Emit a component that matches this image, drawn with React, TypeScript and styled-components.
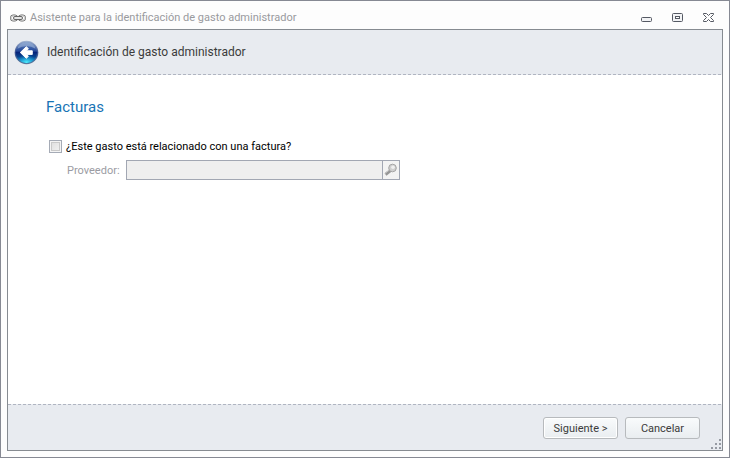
import React, { useState } from "react";
import styled, { createGlobalStyle } from "styled-components";

const GlobalStyle = createGlobalStyle`
  * { box-sizing: border-box; }
  body {
    margin: 0;
    font-family: Tahoma, Roboto, sans-serif;
    font-size: 11px;
    line-height: 17px;
    color: #3b3b3b;
  }
  button, input { font: inherit; }
`;

const Window = styled.div`
  display: flex;
  flex-direction: column;
  min-height: 100vh;
  padding: 0 6px 6px;
  border: 1px solid #868993;
  background: #fdfdfd;
`;

const TitleBar = styled.div`
  display: flex;
  align-items: center;
  height: 28px;
  padding: 5px 7px 0 3px;
`;

const Title = styled.span`
  flex: 1;
  margin-left: 4px;
  color: #999a9e;
`;

const WindowControls = styled.div`
  display: flex;
  gap: 16px;
`;

const WindowButton = styled.button`
  display: flex;
  width: 15px;
  height: 15px;
  padding: 0;
  align-items: center;
  justify-content: center;
  border: 0;
  background: none;
`;

const Frame = styled.main`
  display: flex;
  flex: 1;
  flex-direction: column;
  border: 1px solid #868b91;
  background: #fff;
`;

const dash = (side: string) => `
  background-image: repeating-linear-gradient(90deg, #b0b5c1 0 3px, #e8ebf0 3px 5px);
  background-size: 100% 1px;
  background-repeat: no-repeat;
  background-position: ${side};
`;

const Header = styled.header`
  display: flex;
  align-items: center;
  gap: 8px;
  height: 45px;
  padding: 0 6px 1px;
  background-color: #e8ebf0;
  ${dash("bottom")}
`;

const BackButton = styled.button`
  display: flex;
  padding: 0;
  border: 0;
  background: none;
`;

const Heading = styled.h1`
  margin: 0;
  font-size: 12px;
  font-weight: 400;
`;

const Content = styled.section`
  flex: 1;
  padding: 20px 38px;
`;

const SectionTitle = styled.h2`
  margin: 0 0 18px;
  font-size: 15px;
  font-weight: 400;
  line-height: 24px;
  color: #1874b5;
`;

const CheckLabel = styled.label`
  display: flex;
  align-items: center;
  gap: 4px;
  height: 19px;
  padding-left: 3px;
  color: #000;
`;

const CheckBox = styled.input`
  appearance: none;
  width: 13px;
  height: 13px;
  margin: 0;
  border: 1px solid #a5abb6;
  background: linear-gradient(135deg, #dcdcdc, #f4f4f4);
  box-shadow: inset 0 0 0 1px #f4f4f4, inset 0 0 0 2px #c9c9c9;
  &:checked { background: #6d7686; }
`;

const Field = styled.div`
  display: flex;
  align-items: center;
  gap: 5px;
  margin-top: 4px;
  padding-left: 21px;
`;

const FieldLabel = styled.label`
  width: 54px;
  white-space: nowrap;
  color: #9b9ca3;
`;

const Lookup = styled.div`
  display: flex;
  flex: 0 1 274px;
  height: 20px;
  border: 1px solid #a2a7b3;
  background: #efefef;
`;

const LookupInput = styled.input`
  flex: 1;
  min-width: 0;
  padding: 0 4px;
  border: 0;
  background: none;
`;

const LookupButton = styled.button`
  display: flex;
  width: 17px;
  padding: 0;
  align-items: center;
  justify-content: center;
  border: 0;
  border-left: 1px solid #a2a7b3;
  background: #f3f3f3;
`;

const Footer = styled.footer`
  position: relative;
  display: flex;
  justify-content: flex-end;
  align-items: center;
  gap: 7px;
  height: 46px;
  padding: 2px 22px 0;
  background-color: #e8ebf0;
  ${dash("top")}
`;

const ActionButton = styled.button<{ $primary?: boolean }>`
  width: 75px;
  height: 22px;
  padding: 0;
  border: 1px solid #b7babd;
  border-radius: 3px;
  background: linear-gradient(#f9fbfc, #e9edf0);
  box-shadow: ${(p) => (p.$primary ? "inset 0 0 0 1px #fff" : "none")};
  color: #3b3b3b;
`;

const Grip = styled.svg`
  position: absolute;
  right: 0;
  bottom: 0;
`;

const ChainIcon = () => (
  <svg width="16" height="8" viewBox="0 0 16 8" fill="none" aria-hidden="true">
    <rect x=".5" y="1" width="7" height="6" rx="2.5" stroke="#6f6f6f" />
    <rect x="8.5" y="1" width="7" height="6" rx="2.5" stroke="#6f6f6f" />
    <rect x="1.5" y="2" width="5" height="4" rx="1.5" stroke="#c4c4c4" />
    <rect x="9.5" y="2" width="5" height="4" rx="1.5" stroke="#c4c4c4" />
    <rect x="3.5" y="2.5" width="9" height="3" rx="1.5" fill="#e6e6e6" stroke="#666" />
  </svg>
);

const BackIcon = () => (
  <svg width="25" height="25" viewBox="0 0 26 26" aria-hidden="true">
    <defs>
      <linearGradient id="rim" x2="0" y2="1">
        <stop stopColor="#a6b8d3" />
        <stop offset=".5" stopColor="#344c8d" />
        <stop offset="1" stopColor="#597b9f" />
      </linearGradient>
      <linearGradient id="ball" x2="0" y2="1">
        <stop stopColor="#6587be" />
        <stop offset=".42" stopColor="#254a9b" />
        <stop offset=".5" stopColor="#07247a" />
        <stop offset=".7" stopColor="#07438f" />
        <stop offset="1" stopColor="#20c0ef" />
      </linearGradient>
      <radialGradient id="glow" cx=".5" cy="1" r=".45">
        <stop stopColor="#5af7ff" />
        <stop offset="1" stopColor="#149bdc" stopOpacity="0" />
      </radialGradient>
    </defs>
    <circle cx="13" cy="13" r="12.3" fill="url(#rim)" />
    <circle cx="13" cy="13" r="11" fill="url(#ball)" />
    <circle cx="13" cy="13" r="11" fill="url(#glow)" />
    <path d="M3.5 9a10 10 0 0 1 19 0Q13 4 3.5 9Z" fill="#b8c9e4" opacity=".5" />
    <path d="M6.5 13l6.3-6 2.2 2-2 2.2h6v3.8h-6l2 2-2.2 2Z" fill="#fff" stroke="#fff" strokeLinejoin="round" />
  </svg>
);

const MinimizeIcon = () => (
  <svg width="11" height="11" viewBox="0 0 11 11" aria-hidden="true">
    <rect x=".5" y="5.5" width="10" height="4" rx="1" fill="#f2f3f5" stroke="#555963" />
  </svg>
);

const MaximizeIcon = () => (
  <svg width="11" height="9" viewBox="0 0 11 9" fill="none" stroke="#555963" aria-hidden="true">
    <rect x=".5" y=".5" width="10" height="8" rx="1" fill="#f2f3f5" />
    <rect x="3.5" y="3.5" width="4" height="2" fill="#fff" />
  </svg>
);

const CloseIcon = () => (
  <svg width="11" height="9" viewBox="0 0 11 9" fill="#fdfdfd" stroke="#555963" aria-hidden="true">
    <path d="M.5.5h3l2 2 2-2h3v1l-3 3 3 3v1h-3l-2-2-2 2h-3v-1l3-3-3-3Z" strokeLinejoin="round" />
  </svg>
);

const KeyIcon = () => (
  <svg width="14" height="14" viewBox="0 0 14 14" fill="none" aria-hidden="true">
    <path d="M1.5 11.5l5-4" stroke="#969696" strokeWidth="3" />
    <path d="M1 10.5l5-4" stroke="#c4c4c4" />
    <circle cx="8.5" cy="5" r="3.8" fill="#d0d0d0" stroke="#a5a5a5" />
    <circle cx="9" cy="4.3" r="1.8" fill="#f0f0f0" />
  </svg>
);

export default function App() {
  const [related, setRelated] = useState(false);
  return (
    <>
      <GlobalStyle />
      <Window>
        <TitleBar>
          <ChainIcon />
          <Title>Asistente para la identificación de gasto administrador</Title>
          <WindowControls>
            <WindowButton aria-label="Minimizar"><MinimizeIcon /></WindowButton>
            <WindowButton aria-label="Maximizar"><MaximizeIcon /></WindowButton>
            <WindowButton aria-label="Cerrar"><CloseIcon /></WindowButton>
          </WindowControls>
        </TitleBar>
        <Frame>
          <Header>
            <BackButton aria-label="Atrás"><BackIcon /></BackButton>
            <Heading>Identificación de gasto administrador</Heading>
          </Header>
          <Content>
            <SectionTitle>Facturas</SectionTitle>
            <CheckLabel>
              <CheckBox type="checkbox" checked={related} onChange={(e) => setRelated(e.target.checked)} />
              ¿Este gasto está relacionado con una factura?
            </CheckLabel>
            <Field>
              <FieldLabel htmlFor="proveedor">Proveedor:</FieldLabel>
              <Lookup>
                <LookupInput id="proveedor" disabled={!related} />
                <LookupButton aria-label="Buscar proveedor" disabled={!related}><KeyIcon /></LookupButton>
              </Lookup>
            </Field>
          </Content>
          <Footer>
            <ActionButton $primary>Siguiente &gt;</ActionButton>
            <ActionButton>Cancelar</ActionButton>
            <Grip width="11" height="11" viewBox="0 0 11 11" fill="#969aa3" aria-hidden="true">
              <path d="M8 0h2v2h-2zM4 4h2v2h-2zM8 4h2v2h-2zM0 8h2v2h-2zM4 8h2v2h-2zM8 8h2v2h-2z" />
            </Grip>
          </Footer>
        </Frame>
      </Window>
    </>
  );
}
